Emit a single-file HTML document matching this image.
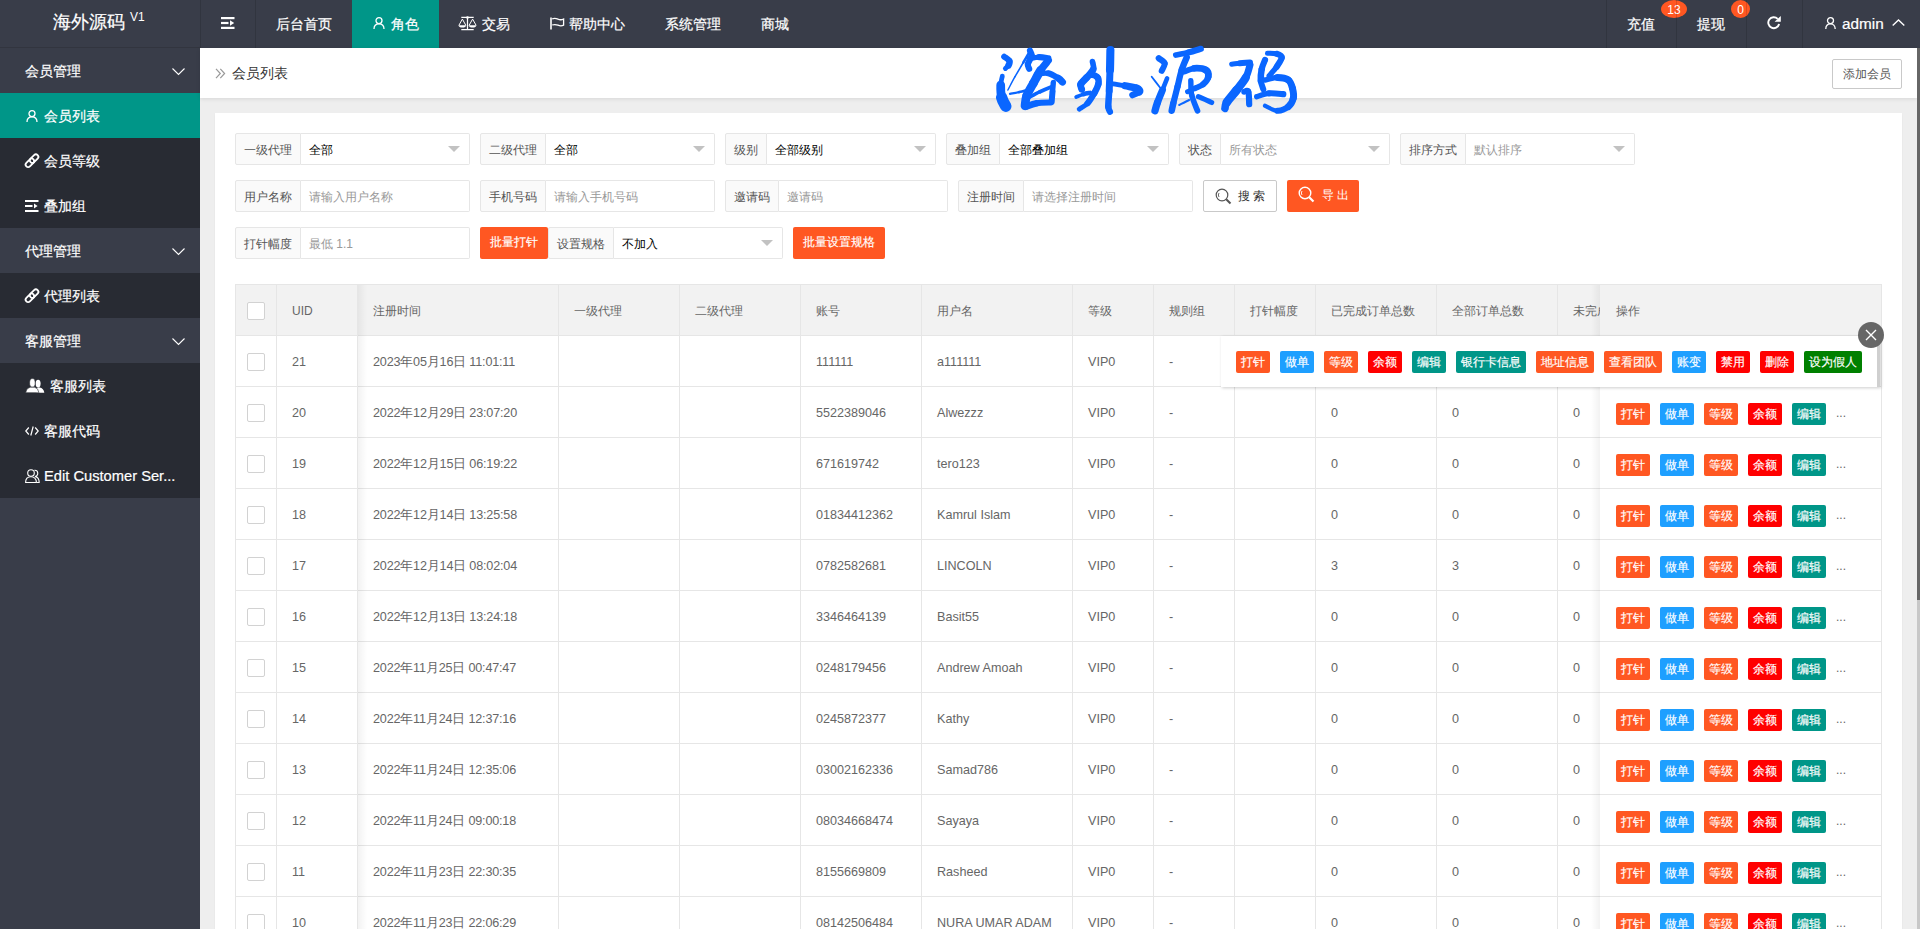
<!DOCTYPE html>
<html><head><meta charset="utf-8"><title>会员列表</title>
<style>
*{margin:0;padding:0;box-sizing:border-box}
html,body{width:1920px;height:929px;overflow:hidden}
body{position:relative;font-family:"Liberation Sans",sans-serif;background:#eeeeee;color:#666}
.a{position:absolute}
svg{position:absolute;overflow:visible}
/* header */
#hd{left:0;top:0;width:1920px;height:48px;background:#393D49}
.logo{left:0;top:0;width:200px;height:48px;border-bottom:1px solid #32353f}
.logo .t{left:53px;top:11px;font-size:18px;line-height:22px;color:#fff;white-space:nowrap;-webkit-text-stroke:0.2px #fff}
.logo .v{left:130px;top:10px;font-size:12px;line-height:14px;color:#fff}
.nv{top:0;height:48px;line-height:48px;color:#fff;font-size:14px;white-space:nowrap;-webkit-text-stroke:0.2px #fff}
.sep{top:0;width:1px;height:48px;background:rgba(0,0,0,.13)}
.badge{top:0;height:18px;line-height:20px;border-radius:50%;background:#FF5722;color:#fff;font-size:12px;text-align:center}
/* sidebar */
#sd{left:0;top:48px;width:200px;height:881px;background:#393D49}
.mi{left:0;width:200px;height:45px;line-height:47px;color:#fff;font-size:14px;white-space:nowrap;-webkit-text-stroke:0.2px #fff}
.dd{left:0;width:200px;background:#282B33}
.sel{background:#009688}
/* breadcrumb */
#bc{left:200px;top:48px;width:1717px;height:50px;background:#fff;box-shadow:0 1px 4px rgba(0,0,0,.1)}
#card{left:215px;top:113px;width:1687px;height:900px;background:#fff;box-shadow:0 1px 2px rgba(0,0,0,.05)}
.btnp{border:1px solid #C9C9C9;border-radius:2px;background:#fff;color:#555;font-size:12px;text-align:center}
/* form */
.lb{height:32px;line-height:32px;border:1px solid #e6e6e6;border-radius:2px 0 0 2px;background:#FAFAFA;color:#555;font-size:12px;padding:0 8px;white-space:nowrap}
.ip{height:32px;line-height:32px;border:1px solid #e6e6e6;border-left:0;border-radius:0 2px 2px 0;background:#fff;color:#000;font-size:12px;padding:0 8px;white-space:nowrap}
.ph{color:#999}
.tri{width:0;height:0;border-left:6px solid transparent;border-right:6px solid transparent;border-top:6px solid #c2c2c2}
.bo{height:32px;line-height:30px;background:#FF5722;color:#fff;border-radius:2px;font-size:12px;text-align:center;white-space:nowrap;-webkit-text-stroke:0.15px #fff}
#sb{left:1917px;top:48px;width:3px;height:881px;background:#c8c8c8}
#sbt{left:1917px;top:48px;width:3px;height:552px;background:#666}
</style><style>
.th{height:50px;line-height:52px;font-size:12px;color:#666;white-space:nowrap}
.td{height:50px;line-height:52px;font-size:12.6px;color:#666;white-space:nowrap}
.cb{width:18px;height:18px;border:1px solid #d2d2d2;border-radius:2px;background:#fff}
.bx{height:22px;line-height:22px;border-radius:2px;color:#fff;font-size:12px;text-align:center;white-space:nowrap;-webkit-text-stroke:0.15px #fff}
.dots{line-height:12px;font-size:12px;color:#666}
</style>
</head><body>

<!-- HEADER -->
<div id="hd" class="a">
  <div class="a logo"><div class="a t">海外源码</div><div class="a v">V1</div></div>
  <div class="sep a" style="left:200px"></div>
  <!-- shrink icon -->
  <svg style="left:221px;top:17px" width="14" height="12" viewBox="0 0 14 12"><rect x="0" y="0" width="13.5" height="2.2" fill="#fff"/><rect x="0" y="4.9" width="7.5" height="2.2" fill="#fff"/><path d="M9 3.2 L13.2 6 L9 8.8Z" fill="#fff"/><rect x="0" y="9.8" width="13.5" height="2.2" fill="#fff"/></svg>
  <div class="sep a" style="left:255px"></div>
  <div class="nv a" style="left:276px">后台首页</div>
  <div class="a" style="left:352px;top:0;width:87px;height:48px;background:#009688"></div>
  <svg style="left:373px;top:17px" width="12" height="12" viewBox="0 0 12 12"><circle cx="6" cy="3.6" r="3" fill="none" stroke="#fff" stroke-width="1.3"/><path d="M1 12 C1 8.6 3 6.8 6 6.8 C9 6.8 11 8.6 11 12" fill="none" stroke="#fff" stroke-width="1.3"/></svg>
  <div class="nv a" style="left:391px">角色</div>
  <!-- scale icon -->
  <svg style="left:454px;top:12px" width="28" height="22" viewBox="0 0 28 22"><g stroke="#fff" fill="none"><path d="M7.3 5.45 H19.7 M13.5 5.5 V17.5 M7.3 17.6 H19.7" stroke-width="1.2"/><path d="M8.4 7.1 L4.9 13.3 M8.4 7.1 L11.8 13.3 M18.6 7.1 L15.1 13.3 M18.6 7.1 L22.1 13.3" stroke-width="1"/></g><circle cx="13.5" cy="5.45" r="1.3" fill="#fff"/><path d="M4.5 13.2 H12.2 Q11.8 15.6 8.35 15.6 Q4.9 15.6 4.5 13.2Z M14.7 13.2 H22.4 Q22 15.6 18.55 15.6 Q15.1 15.6 14.7 13.2Z" fill="#fff"/></svg>
  <div class="nv a" style="left:482px">交易</div>
  <!-- flag icon -->
  <svg style="left:550px;top:17px" width="15" height="13" viewBox="0 0 15 13"><path d="M1 0.5 V12.5" stroke="#fff" stroke-width="1.6"/><path d="M2.2 1.8 Q5 0.8 8 2.2 Q11 3.4 13.6 2 V8.2 Q11 9.5 8 8.2 Q5 7 2.2 8" fill="none" stroke="#fff" stroke-width="1.3"/></svg>
  <div class="nv a" style="left:569px">帮助中心</div>
  <div class="nv a" style="left:665px">系统管理</div>
  <div class="nv a" style="left:761px">商城</div>

  <div class="sep a" style="left:1606px"></div>
  <div class="nv a" style="left:1627px">充值</div>
  <div class="badge a" style="left:1661px;width:26px">13</div>
  <div class="sep a" style="left:1676px"></div>
  <div class="nv a" style="left:1697px">提现</div>
  <div class="badge a" style="left:1731px;width:19px">0</div>
  <div class="sep a" style="left:1746px"></div>
  <!-- refresh -->
  <svg style="left:1767px;top:16px" width="14" height="14" viewBox="0 0 14 14"><path d="M10.69 2.81 A5.5 5.5 0 1 0 12.11 8.12" fill="none" stroke="#fff" stroke-width="1.9"/><path d="M7.6 5.8 L13.8 0 L13.8 5.8Z" fill="#fff"/></svg>
  <div class="sep a" style="left:1802px"></div>
  <svg style="left:1825px;top:17px" width="11" height="12" viewBox="0 0 11 12"><circle cx="5.5" cy="3.6" r="3" fill="none" stroke="#fff" stroke-width="1.3"/><path d="M0.8 12 C0.8 8.6 2.8 6.8 5.5 6.8 C8.2 6.8 10.2 8.6 10.2 12" fill="none" stroke="#fff" stroke-width="1.3"/></svg>
  <div class="nv a" style="left:1842px;font-size:15.3px">admin</div>
  <svg style="left:1892px;top:19px" width="13" height="7" viewBox="0 0 13 7"><path d="M0.7 6.5 L6.5 0.9 L12.3 6.5" fill="none" stroke="#fff" stroke-width="1.4"/></svg>
</div>

<!-- SIDEBAR -->
<div id="sd" class="a">
  <div class="mi a" style="top:0"><span class="a" style="left:25px">会员管理</span>
    <svg style="left:172px;top:20px" width="13" height="7" viewBox="0 0 13 7"><path d="M0.5 0.5 L6.5 6.5 L12.5 0.5" fill="none" stroke="#fff" stroke-width="1.1"/></svg></div>
  <div class="dd a" style="top:45px;height:135px"></div>
  <div class="mi a sel" style="top:45px">
    <svg style="left:26px;top:17px" width="12" height="12" viewBox="0 0 12 12"><circle cx="6" cy="3.6" r="3" fill="none" stroke="#fff" stroke-width="1.3"/><path d="M1 12 C1 8.6 3 6.8 6 6.8 C9 6.8 11 8.6 11 12" fill="none" stroke="#fff" stroke-width="1.3"/></svg>
    <span class="a" style="left:44px">会员列表</span></div>
  <div class="mi a" style="top:90px">
    <svg style="left:24px;top:14px" width="17" height="17" viewBox="0 0 17 17"><g fill="none" stroke="#fff" stroke-width="1.8"><rect x="0.9" y="8.3" width="10" height="5" rx="2.5" transform="rotate(-45 5.9 10.8)"/><rect x="5.1" y="4.1" width="10" height="5" rx="2.5" transform="rotate(-45 10.1 6.6)"/></g></svg>
    <span class="a" style="left:44px">会员等级</span></div>
  <div class="mi a" style="top:135px">
    <svg style="left:25px;top:17px" width="14" height="12" viewBox="0 0 14 12"><rect x="0" y="0" width="13.5" height="2" fill="#fff"/><rect x="0" y="5" width="7.5" height="2" fill="#fff"/><path d="M9 3.4 L12.6 6 L9 8.6Z" fill="#fff"/><rect x="0" y="10" width="13.5" height="2" fill="#fff"/></svg>
    <span class="a" style="left:44px">叠加组</span></div>
  <div class="mi a" style="top:180px"><span class="a" style="left:25px">代理管理</span>
    <svg style="left:172px;top:20px" width="13" height="7" viewBox="0 0 13 7"><path d="M0.5 0.5 L6.5 6.5 L12.5 0.5" fill="none" stroke="#fff" stroke-width="1.1"/></svg></div>
  <div class="dd a" style="top:225px;height:45px"></div>
  <div class="mi a" style="top:225px">
    <svg style="left:24px;top:14px" width="17" height="17" viewBox="0 0 17 17"><g fill="none" stroke="#fff" stroke-width="1.8"><rect x="0.9" y="8.3" width="10" height="5" rx="2.5" transform="rotate(-45 5.9 10.8)"/><rect x="5.1" y="4.1" width="10" height="5" rx="2.5" transform="rotate(-45 10.1 6.6)"/></g></svg>
    <span class="a" style="left:44px">代理列表</span></div>
  <div class="mi a" style="top:270px"><span class="a" style="left:25px">客服管理</span>
    <svg style="left:172px;top:20px" width="13" height="7" viewBox="0 0 13 7"><path d="M0.5 0.5 L6.5 6.5 L12.5 0.5" fill="none" stroke="#fff" stroke-width="1.1"/></svg></div>
  <div class="dd a" style="top:315px;height:135px"></div>
  <div class="mi a" style="top:315px">
    <svg style="left:25px;top:9px" width="20" height="22" viewBox="0 0 20 22"><g fill="#fff"><ellipse cx="13.1" cy="11.6" rx="2.5" ry="3.9"/><path d="M11.5 20.7 Q11.2 16.4 13 15.6 H14.6 Q18.8 16.3 19.3 20.7Z"/><ellipse cx="7.4" cy="10.9" rx="2.8" ry="4.3" stroke="#282B33" stroke-width="0.6"/><path d="M0.7 20.7 Q1.2 16 5.2 15.2 H9.6 Q13.4 16 13.9 20.7Z" stroke="#282B33" stroke-width="0.6"/></g></svg>
    <span class="a" style="left:50px">客服列表</span></div>
  <div class="mi a" style="top:360px">
    <svg style="left:25px;top:18px" width="14" height="10" viewBox="0 0 14 10"><path d="M3.8 1.5 L0.8 5 L3.8 8.5 M10.2 1.5 L13.2 5 L10.2 8.5 M8.2 0.5 L5.8 9.5" fill="none" stroke="#fff" stroke-width="1.2"/></svg>
    <span class="a" style="left:44px">客服代码</span></div>
  <div class="mi a" style="top:405px">
    <svg style="left:25px;top:16px" width="15" height="14" viewBox="0 0 15 14"><circle cx="6" cy="4" r="3.3" fill="none" stroke="#fff" stroke-width="1.1"/><path d="M0.6 13.5 C0.6 9.5 3 7.8 6 7.8 C9 7.8 11.4 9.5 11.4 13.5Z" fill="none" stroke="#fff" stroke-width="1.1"/><path d="M9.4 1.3 A3 3 0 0 1 10 7.4 C12.6 8 14.2 10 14.2 13.5 H12" fill="none" stroke="#fff" stroke-width="1.1"/></svg>
    <span class="a" style="left:44px;font-size:14.7px">Edit Customer Ser...</span></div>
</div>

<!-- BREADCRUMB -->
<div id="bc" class="a">
  <svg style="left:15px;top:20px" width="11" height="11" viewBox="0 0 11 11"><path d="M1 0.8 L5.3 5.5 L1 10.2 M5.3 0.8 L9.6 5.5 L5.3 10.2" fill="none" stroke="#999" stroke-width="1.2"/></svg>
  <div class="a" style="left:32px;top:0;line-height:50px;font-size:14px;color:#333">会员列表</div>
  <div class="a btnp" style="left:1632px;top:11px;width:70px;height:30px;line-height:28px">添加会员</div>
</div>
<div id="sb" class="a"></div><div id="sbt" class="a"></div>

<!-- CARD -->
<div id="card" class="a"></div>

<!-- FORM -->
<div class="a lb" style="left:235px;top:133px;width:66px">一级代理</div><div class="a ip" style="left:301px;top:133px;width:169px">全部</div><div class="a tri" style="left:448px;top:146px"></div>
<div class="a lb" style="left:480px;top:133px;width:66px">二级代理</div><div class="a ip" style="left:546px;top:133px;width:169px">全部</div><div class="a tri" style="left:693px;top:146px"></div>
<div class="a lb" style="left:725px;top:133px;width:42px">级别</div><div class="a ip" style="left:767px;top:133px;width:169px">全部级别</div><div class="a tri" style="left:914px;top:146px"></div>
<div class="a lb" style="left:946px;top:133px;width:54px">叠加组</div><div class="a ip" style="left:1000px;top:133px;width:169px">全部叠加组</div><div class="a tri" style="left:1147px;top:146px"></div>
<div class="a lb" style="left:1179px;top:133px;width:42px">状态</div><div class="a ip ph" style="left:1221px;top:133px;width:169px">所有状态</div><div class="a tri" style="left:1368px;top:146px"></div>
<div class="a lb" style="left:1400px;top:133px;width:66px">排序方式</div><div class="a ip ph" style="left:1466px;top:133px;width:169px">默认排序</div><div class="a tri" style="left:1613px;top:146px"></div>
<div class="a lb" style="left:235px;top:180px;width:66px">用户名称</div><div class="a ip ph" style="left:301px;top:180px;width:169px">请输入用户名称</div>
<div class="a lb" style="left:480px;top:180px;width:66px">手机号码</div><div class="a ip ph" style="left:546px;top:180px;width:169px">请输入手机号码</div>
<div class="a lb" style="left:725px;top:180px;width:54px">邀请码</div><div class="a ip ph" style="left:779px;top:180px;width:169px">邀请码</div>
<div class="a lb" style="left:958px;top:180px;width:66px">注册时间</div><div class="a ip ph" style="left:1024px;top:180px;width:169px">请选择注册时间</div>
<div class="a lb" style="left:235px;top:227px;width:66px">打针幅度</div><div class="a ip ph" style="left:301px;top:227px;width:169px">最低 1.1</div>
<div class="a btnp" style="left:1203px;top:180px;width:74px;height:32px"></div>
<svg style="left:1215px;top:188px" width="17" height="17" viewBox="0 0 17 17"><circle cx="7" cy="7" r="5.8" fill="none" stroke="#555" stroke-width="1.2"/><path d="M11.2 11.2 L15.5 15.5" stroke="#555" stroke-width="2"/><path d="M4 5 A3.5 3.5 0 0 0 4 9" fill="none" stroke="#555" stroke-width="0.9"/></svg>
<div class="a" style="left:1238px;top:180px;line-height:32px;font-size:12px;color:#333;letter-spacing:3px">搜索</div>
<div class="a bo" style="left:1287px;top:180px;width:72px"></div>
<svg style="left:1298px;top:186px" width="17" height="17" viewBox="0 0 17 17"><circle cx="7" cy="7" r="5.8" fill="none" stroke="#fff" stroke-width="1.4"/><path d="M11.2 11.2 L15.5 15.5" stroke="#fff" stroke-width="2.2"/><path d="M4 5 A3.5 3.5 0 0 0 4 9" fill="none" stroke="#fff" stroke-width="0.9"/></svg>
<div class="a" style="left:1322px;top:179px;line-height:32px;font-size:12px;color:#fff;letter-spacing:3px">导出</div>
<div class="a bo" style="left:480px;top:227px;width:68px">批量打针</div>
<div class="a lb" style="left:548px;top:227px;width:66px">设置规格</div><div class="a ip" style="left:614px;top:227px;width:169px">不加入</div><div class="a tri" style="left:761px;top:240px"></div>
<div class="a bo" style="left:793px;top:227px;width:92px">批量设置规格</div>
<!-- TABLE -->
<div class="a" style="left:235px;top:284px;width:1647px;height:645px;border:1px solid #e6e6e6;border-bottom:0;background:#fff"></div>
<div class="a" style="left:236px;top:285px;width:1645px;height:50px;background:#F2F2F2"></div>
<div class="a" style="left:276px;top:285px;width:1px;height:645px;background:#e6e6e6"></div>
<div class="a" style="left:357px;top:285px;width:1px;height:645px;background:#e6e6e6"></div>
<div class="a" style="left:558px;top:285px;width:1px;height:645px;background:#e6e6e6"></div>
<div class="a" style="left:679px;top:285px;width:1px;height:645px;background:#e6e6e6"></div>
<div class="a" style="left:800px;top:285px;width:1px;height:645px;background:#e6e6e6"></div>
<div class="a" style="left:921px;top:285px;width:1px;height:645px;background:#e6e6e6"></div>
<div class="a" style="left:1072px;top:285px;width:1px;height:645px;background:#e6e6e6"></div>
<div class="a" style="left:1153px;top:285px;width:1px;height:645px;background:#e6e6e6"></div>
<div class="a" style="left:1234px;top:285px;width:1px;height:645px;background:#e6e6e6"></div>
<div class="a" style="left:1315px;top:285px;width:1px;height:645px;background:#e6e6e6"></div>
<div class="a" style="left:1436px;top:285px;width:1px;height:645px;background:#e6e6e6"></div>
<div class="a" style="left:1557px;top:285px;width:1px;height:645px;background:#e6e6e6"></div>
<div class="a" style="left:236px;top:335px;width:1645px;height:1px;background:#e6e6e6"></div>
<div class="a" style="left:236px;top:386px;width:1645px;height:1px;background:#e6e6e6"></div>
<div class="a" style="left:236px;top:437px;width:1645px;height:1px;background:#e6e6e6"></div>
<div class="a" style="left:236px;top:488px;width:1645px;height:1px;background:#e6e6e6"></div>
<div class="a" style="left:236px;top:539px;width:1645px;height:1px;background:#e6e6e6"></div>
<div class="a" style="left:236px;top:590px;width:1645px;height:1px;background:#e6e6e6"></div>
<div class="a" style="left:236px;top:641px;width:1645px;height:1px;background:#e6e6e6"></div>
<div class="a" style="left:236px;top:692px;width:1645px;height:1px;background:#e6e6e6"></div>
<div class="a" style="left:236px;top:743px;width:1645px;height:1px;background:#e6e6e6"></div>
<div class="a" style="left:236px;top:794px;width:1645px;height:1px;background:#e6e6e6"></div>
<div class="a" style="left:236px;top:845px;width:1645px;height:1px;background:#e6e6e6"></div>
<div class="a" style="left:236px;top:896px;width:1645px;height:1px;background:#e6e6e6"></div>
<div class="a th" style="left:292px;top:285px">UID</div>
<div class="a th" style="left:373px;top:285px">注册时间</div>
<div class="a th" style="left:574px;top:285px">一级代理</div>
<div class="a th" style="left:695px;top:285px">二级代理</div>
<div class="a th" style="left:816px;top:285px">账号</div>
<div class="a th" style="left:937px;top:285px">用户名</div>
<div class="a th" style="left:1088px;top:285px">等级</div>
<div class="a th" style="left:1169px;top:285px">规则组</div>
<div class="a th" style="left:1250px;top:285px">打针幅度</div>
<div class="a th" style="left:1331px;top:285px">已完成订单总数</div>
<div class="a th" style="left:1452px;top:285px">全部订单总数</div>
<div class="a th" style="left:1573px;top:285px">未完成订单</div>
<div class="a td" style="left:373px;top:336px;letter-spacing:-0.18px">2023年05月16日 11:01:11</div>
<div class="a td" style="left:816px;top:336px">111111</div>
<div class="a td" style="left:937px;top:336px">a111111</div>
<div class="a td" style="left:1088px;top:336px">VIP0</div>
<div class="a td" style="left:1169px;top:336px">-</div>
<div class="a td" style="left:1331px;top:336px">0</div>
<div class="a td" style="left:1452px;top:336px">0</div>
<div class="a td" style="left:1573px;top:336px">0</div>
<div class="a td" style="left:373px;top:387px;letter-spacing:-0.18px">2022年12月29日 23:07:20</div>
<div class="a td" style="left:816px;top:387px">5522389046</div>
<div class="a td" style="left:937px;top:387px">Alwezzz</div>
<div class="a td" style="left:1088px;top:387px">VIP0</div>
<div class="a td" style="left:1169px;top:387px">-</div>
<div class="a td" style="left:1331px;top:387px">0</div>
<div class="a td" style="left:1452px;top:387px">0</div>
<div class="a td" style="left:1573px;top:387px">0</div>
<div class="a td" style="left:373px;top:438px;letter-spacing:-0.18px">2022年12月15日 06:19:22</div>
<div class="a td" style="left:816px;top:438px">671619742</div>
<div class="a td" style="left:937px;top:438px">tero123</div>
<div class="a td" style="left:1088px;top:438px">VIP0</div>
<div class="a td" style="left:1169px;top:438px">-</div>
<div class="a td" style="left:1331px;top:438px">0</div>
<div class="a td" style="left:1452px;top:438px">0</div>
<div class="a td" style="left:1573px;top:438px">0</div>
<div class="a td" style="left:373px;top:489px;letter-spacing:-0.18px">2022年12月14日 13:25:58</div>
<div class="a td" style="left:816px;top:489px">01834412362</div>
<div class="a td" style="left:937px;top:489px">Kamrul Islam</div>
<div class="a td" style="left:1088px;top:489px">VIP0</div>
<div class="a td" style="left:1169px;top:489px">-</div>
<div class="a td" style="left:1331px;top:489px">0</div>
<div class="a td" style="left:1452px;top:489px">0</div>
<div class="a td" style="left:1573px;top:489px">0</div>
<div class="a td" style="left:373px;top:540px;letter-spacing:-0.18px">2022年12月14日 08:02:04</div>
<div class="a td" style="left:816px;top:540px">0782582681</div>
<div class="a td" style="left:937px;top:540px">LINCOLN</div>
<div class="a td" style="left:1088px;top:540px">VIP0</div>
<div class="a td" style="left:1169px;top:540px">-</div>
<div class="a td" style="left:1331px;top:540px">3</div>
<div class="a td" style="left:1452px;top:540px">3</div>
<div class="a td" style="left:1573px;top:540px">0</div>
<div class="a td" style="left:373px;top:591px;letter-spacing:-0.18px">2022年12月13日 13:24:18</div>
<div class="a td" style="left:816px;top:591px">3346464139</div>
<div class="a td" style="left:937px;top:591px">Basit55</div>
<div class="a td" style="left:1088px;top:591px">VIP0</div>
<div class="a td" style="left:1169px;top:591px">-</div>
<div class="a td" style="left:1331px;top:591px">0</div>
<div class="a td" style="left:1452px;top:591px">0</div>
<div class="a td" style="left:1573px;top:591px">0</div>
<div class="a td" style="left:373px;top:642px;letter-spacing:-0.18px">2022年11月25日 00:47:47</div>
<div class="a td" style="left:816px;top:642px">0248179456</div>
<div class="a td" style="left:937px;top:642px">Andrew Amoah</div>
<div class="a td" style="left:1088px;top:642px">VIP0</div>
<div class="a td" style="left:1169px;top:642px">-</div>
<div class="a td" style="left:1331px;top:642px">0</div>
<div class="a td" style="left:1452px;top:642px">0</div>
<div class="a td" style="left:1573px;top:642px">0</div>
<div class="a td" style="left:373px;top:693px;letter-spacing:-0.18px">2022年11月24日 12:37:16</div>
<div class="a td" style="left:816px;top:693px">0245872377</div>
<div class="a td" style="left:937px;top:693px">Kathy</div>
<div class="a td" style="left:1088px;top:693px">VIP0</div>
<div class="a td" style="left:1169px;top:693px">-</div>
<div class="a td" style="left:1331px;top:693px">0</div>
<div class="a td" style="left:1452px;top:693px">0</div>
<div class="a td" style="left:1573px;top:693px">0</div>
<div class="a td" style="left:373px;top:744px;letter-spacing:-0.18px">2022年11月24日 12:35:06</div>
<div class="a td" style="left:816px;top:744px">03002162336</div>
<div class="a td" style="left:937px;top:744px">Samad786</div>
<div class="a td" style="left:1088px;top:744px">VIP0</div>
<div class="a td" style="left:1169px;top:744px">-</div>
<div class="a td" style="left:1331px;top:744px">0</div>
<div class="a td" style="left:1452px;top:744px">0</div>
<div class="a td" style="left:1573px;top:744px">0</div>
<div class="a td" style="left:373px;top:795px;letter-spacing:-0.18px">2022年11月24日 09:00:18</div>
<div class="a td" style="left:816px;top:795px">08034668474</div>
<div class="a td" style="left:937px;top:795px">Sayaya</div>
<div class="a td" style="left:1088px;top:795px">VIP0</div>
<div class="a td" style="left:1169px;top:795px">-</div>
<div class="a td" style="left:1331px;top:795px">0</div>
<div class="a td" style="left:1452px;top:795px">0</div>
<div class="a td" style="left:1573px;top:795px">0</div>
<div class="a td" style="left:373px;top:846px;letter-spacing:-0.18px">2022年11月23日 22:30:35</div>
<div class="a td" style="left:816px;top:846px">8155669809</div>
<div class="a td" style="left:937px;top:846px">Rasheed</div>
<div class="a td" style="left:1088px;top:846px">VIP0</div>
<div class="a td" style="left:1169px;top:846px">-</div>
<div class="a td" style="left:1331px;top:846px">0</div>
<div class="a td" style="left:1452px;top:846px">0</div>
<div class="a td" style="left:1573px;top:846px">0</div>
<div class="a td" style="left:373px;top:897px;letter-spacing:-0.18px">2022年11月23日 22:06:29</div>
<div class="a td" style="left:816px;top:897px">08142506484</div>
<div class="a td" style="left:937px;top:897px">NURA UMAR ADAM</div>
<div class="a td" style="left:1088px;top:897px">VIP0</div>
<div class="a td" style="left:1169px;top:897px">-</div>
<div class="a td" style="left:1331px;top:897px">0</div>
<div class="a td" style="left:1452px;top:897px">0</div>
<div class="a td" style="left:1573px;top:897px">0</div>
<div class="a" style="left:236px;top:285px;width:121px;height:645px;background:#fff"></div>
<div class="a" style="left:358px;top:285px;width:9px;height:645px;background:linear-gradient(to right,rgba(0,0,0,.05),rgba(0,0,0,0))"></div>
<div class="a" style="left:236px;top:285px;width:121px;height:50px;background:#F2F2F2"></div>
<div class="a" style="left:276px;top:285px;width:1px;height:645px;background:#e6e6e6"></div>
<div class="a" style="left:357px;top:285px;width:1px;height:645px;background:#e6e6e6"></div>
<div class="a" style="left:236px;top:335px;width:121px;height:1px;background:#e6e6e6"></div>
<div class="a" style="left:236px;top:386px;width:121px;height:1px;background:#e6e6e6"></div>
<div class="a" style="left:236px;top:437px;width:121px;height:1px;background:#e6e6e6"></div>
<div class="a" style="left:236px;top:488px;width:121px;height:1px;background:#e6e6e6"></div>
<div class="a" style="left:236px;top:539px;width:121px;height:1px;background:#e6e6e6"></div>
<div class="a" style="left:236px;top:590px;width:121px;height:1px;background:#e6e6e6"></div>
<div class="a" style="left:236px;top:641px;width:121px;height:1px;background:#e6e6e6"></div>
<div class="a" style="left:236px;top:692px;width:121px;height:1px;background:#e6e6e6"></div>
<div class="a" style="left:236px;top:743px;width:121px;height:1px;background:#e6e6e6"></div>
<div class="a" style="left:236px;top:794px;width:121px;height:1px;background:#e6e6e6"></div>
<div class="a" style="left:236px;top:845px;width:121px;height:1px;background:#e6e6e6"></div>
<div class="a" style="left:236px;top:896px;width:121px;height:1px;background:#e6e6e6"></div>
<div class="a cb" style="left:247px;top:302px"></div>
<div class="a th" style="left:292px;top:285px">UID</div>
<div class="a cb" style="left:247px;top:353px"></div>
<div class="a td" style="left:292px;top:336px">21</div>
<div class="a cb" style="left:247px;top:404px"></div>
<div class="a td" style="left:292px;top:387px">20</div>
<div class="a cb" style="left:247px;top:455px"></div>
<div class="a td" style="left:292px;top:438px">19</div>
<div class="a cb" style="left:247px;top:506px"></div>
<div class="a td" style="left:292px;top:489px">18</div>
<div class="a cb" style="left:247px;top:557px"></div>
<div class="a td" style="left:292px;top:540px">17</div>
<div class="a cb" style="left:247px;top:608px"></div>
<div class="a td" style="left:292px;top:591px">16</div>
<div class="a cb" style="left:247px;top:659px"></div>
<div class="a td" style="left:292px;top:642px">15</div>
<div class="a cb" style="left:247px;top:710px"></div>
<div class="a td" style="left:292px;top:693px">14</div>
<div class="a cb" style="left:247px;top:761px"></div>
<div class="a td" style="left:292px;top:744px">13</div>
<div class="a cb" style="left:247px;top:812px"></div>
<div class="a td" style="left:292px;top:795px">12</div>
<div class="a cb" style="left:247px;top:863px"></div>
<div class="a td" style="left:292px;top:846px">11</div>
<div class="a cb" style="left:247px;top:914px"></div>
<div class="a td" style="left:292px;top:897px">10</div>
<div class="a" style="left:1591px;top:285px;width:9px;height:645px;background:linear-gradient(to left,rgba(0,0,0,.05),rgba(0,0,0,0))"></div>
<div class="a" style="left:1600px;top:285px;width:281px;height:645px;background:#fff"></div>
<div class="a" style="left:1600px;top:285px;width:281px;height:50px;background:#F2F2F2"></div>
<div class="a" style="left:1600px;top:335px;width:281px;height:1px;background:#e6e6e6"></div>
<div class="a" style="left:1600px;top:386px;width:281px;height:1px;background:#e6e6e6"></div>
<div class="a" style="left:1600px;top:437px;width:281px;height:1px;background:#e6e6e6"></div>
<div class="a" style="left:1600px;top:488px;width:281px;height:1px;background:#e6e6e6"></div>
<div class="a" style="left:1600px;top:539px;width:281px;height:1px;background:#e6e6e6"></div>
<div class="a" style="left:1600px;top:590px;width:281px;height:1px;background:#e6e6e6"></div>
<div class="a" style="left:1600px;top:641px;width:281px;height:1px;background:#e6e6e6"></div>
<div class="a" style="left:1600px;top:692px;width:281px;height:1px;background:#e6e6e6"></div>
<div class="a" style="left:1600px;top:743px;width:281px;height:1px;background:#e6e6e6"></div>
<div class="a" style="left:1600px;top:794px;width:281px;height:1px;background:#e6e6e6"></div>
<div class="a" style="left:1600px;top:845px;width:281px;height:1px;background:#e6e6e6"></div>
<div class="a" style="left:1600px;top:896px;width:281px;height:1px;background:#e6e6e6"></div>
<div class="a th" style="left:1616px;top:285px">操作</div>
<div class="a bx" style="left:1616px;top:403px;width:34px;background:#FF5722">打针</div>
<div class="a bx" style="left:1660px;top:403px;width:34px;background:#1E9FFF">做单</div>
<div class="a bx" style="left:1704px;top:403px;width:34px;background:#FF5722">等级</div>
<div class="a bx" style="left:1748px;top:403px;width:34px;background:#FF0000">余额</div>
<div class="a bx" style="left:1792px;top:403px;width:34px;background:#009688">编辑</div>
<div class="a dots" style="left:1836px;top:407px">...</div>
<div class="a bx" style="left:1616px;top:454px;width:34px;background:#FF5722">打针</div>
<div class="a bx" style="left:1660px;top:454px;width:34px;background:#1E9FFF">做单</div>
<div class="a bx" style="left:1704px;top:454px;width:34px;background:#FF5722">等级</div>
<div class="a bx" style="left:1748px;top:454px;width:34px;background:#FF0000">余额</div>
<div class="a bx" style="left:1792px;top:454px;width:34px;background:#009688">编辑</div>
<div class="a dots" style="left:1836px;top:458px">...</div>
<div class="a bx" style="left:1616px;top:505px;width:34px;background:#FF5722">打针</div>
<div class="a bx" style="left:1660px;top:505px;width:34px;background:#1E9FFF">做单</div>
<div class="a bx" style="left:1704px;top:505px;width:34px;background:#FF5722">等级</div>
<div class="a bx" style="left:1748px;top:505px;width:34px;background:#FF0000">余额</div>
<div class="a bx" style="left:1792px;top:505px;width:34px;background:#009688">编辑</div>
<div class="a dots" style="left:1836px;top:509px">...</div>
<div class="a bx" style="left:1616px;top:556px;width:34px;background:#FF5722">打针</div>
<div class="a bx" style="left:1660px;top:556px;width:34px;background:#1E9FFF">做单</div>
<div class="a bx" style="left:1704px;top:556px;width:34px;background:#FF5722">等级</div>
<div class="a bx" style="left:1748px;top:556px;width:34px;background:#FF0000">余额</div>
<div class="a bx" style="left:1792px;top:556px;width:34px;background:#009688">编辑</div>
<div class="a dots" style="left:1836px;top:560px">...</div>
<div class="a bx" style="left:1616px;top:607px;width:34px;background:#FF5722">打针</div>
<div class="a bx" style="left:1660px;top:607px;width:34px;background:#1E9FFF">做单</div>
<div class="a bx" style="left:1704px;top:607px;width:34px;background:#FF5722">等级</div>
<div class="a bx" style="left:1748px;top:607px;width:34px;background:#FF0000">余额</div>
<div class="a bx" style="left:1792px;top:607px;width:34px;background:#009688">编辑</div>
<div class="a dots" style="left:1836px;top:611px">...</div>
<div class="a bx" style="left:1616px;top:658px;width:34px;background:#FF5722">打针</div>
<div class="a bx" style="left:1660px;top:658px;width:34px;background:#1E9FFF">做单</div>
<div class="a bx" style="left:1704px;top:658px;width:34px;background:#FF5722">等级</div>
<div class="a bx" style="left:1748px;top:658px;width:34px;background:#FF0000">余额</div>
<div class="a bx" style="left:1792px;top:658px;width:34px;background:#009688">编辑</div>
<div class="a dots" style="left:1836px;top:662px">...</div>
<div class="a bx" style="left:1616px;top:709px;width:34px;background:#FF5722">打针</div>
<div class="a bx" style="left:1660px;top:709px;width:34px;background:#1E9FFF">做单</div>
<div class="a bx" style="left:1704px;top:709px;width:34px;background:#FF5722">等级</div>
<div class="a bx" style="left:1748px;top:709px;width:34px;background:#FF0000">余额</div>
<div class="a bx" style="left:1792px;top:709px;width:34px;background:#009688">编辑</div>
<div class="a dots" style="left:1836px;top:713px">...</div>
<div class="a bx" style="left:1616px;top:760px;width:34px;background:#FF5722">打针</div>
<div class="a bx" style="left:1660px;top:760px;width:34px;background:#1E9FFF">做单</div>
<div class="a bx" style="left:1704px;top:760px;width:34px;background:#FF5722">等级</div>
<div class="a bx" style="left:1748px;top:760px;width:34px;background:#FF0000">余额</div>
<div class="a bx" style="left:1792px;top:760px;width:34px;background:#009688">编辑</div>
<div class="a dots" style="left:1836px;top:764px">...</div>
<div class="a bx" style="left:1616px;top:811px;width:34px;background:#FF5722">打针</div>
<div class="a bx" style="left:1660px;top:811px;width:34px;background:#1E9FFF">做单</div>
<div class="a bx" style="left:1704px;top:811px;width:34px;background:#FF5722">等级</div>
<div class="a bx" style="left:1748px;top:811px;width:34px;background:#FF0000">余额</div>
<div class="a bx" style="left:1792px;top:811px;width:34px;background:#009688">编辑</div>
<div class="a dots" style="left:1836px;top:815px">...</div>
<div class="a bx" style="left:1616px;top:862px;width:34px;background:#FF5722">打针</div>
<div class="a bx" style="left:1660px;top:862px;width:34px;background:#1E9FFF">做单</div>
<div class="a bx" style="left:1704px;top:862px;width:34px;background:#FF5722">等级</div>
<div class="a bx" style="left:1748px;top:862px;width:34px;background:#FF0000">余额</div>
<div class="a bx" style="left:1792px;top:862px;width:34px;background:#009688">编辑</div>
<div class="a dots" style="left:1836px;top:866px">...</div>
<div class="a bx" style="left:1616px;top:913px;width:34px;background:#FF5722">打针</div>
<div class="a bx" style="left:1660px;top:913px;width:34px;background:#1E9FFF">做单</div>
<div class="a bx" style="left:1704px;top:913px;width:34px;background:#FF5722">等级</div>
<div class="a bx" style="left:1748px;top:913px;width:34px;background:#FF0000">余额</div>
<div class="a bx" style="left:1792px;top:913px;width:34px;background:#009688">编辑</div>
<div class="a dots" style="left:1836px;top:917px">...</div>
<div class="a" style="left:1221px;top:336px;width:659px;height:51px;background:#fff;box-shadow:1px 1px 3px rgba(0,0,0,.2)"></div>
<div class="a" style="left:1877px;top:336px;width:3px;height:51px;background:#cfcfcf"></div>
<div class="a bx" style="left:1236px;top:351px;width:34px;background:#FF5722">打针</div>
<div class="a bx" style="left:1280px;top:351px;width:34px;background:#1E9FFF">做单</div>
<div class="a bx" style="left:1324px;top:351px;width:34px;background:#FF5722">等级</div>
<div class="a bx" style="left:1368px;top:351px;width:34px;background:#FF0000">余额</div>
<div class="a bx" style="left:1412px;top:351px;width:34px;background:#009688">编辑</div>
<div class="a bx" style="left:1456px;top:351px;width:70px;background:#009688">银行卡信息</div>
<div class="a bx" style="left:1536px;top:351px;width:58px;background:#FF5722">地址信息</div>
<div class="a bx" style="left:1604px;top:351px;width:58px;background:#FF5722">查看团队</div>
<div class="a bx" style="left:1672px;top:351px;width:34px;background:#1E9FFF">账变</div>
<div class="a bx" style="left:1716px;top:351px;width:34px;background:#FF0000">禁用</div>
<div class="a bx" style="left:1760px;top:351px;width:34px;background:#FF0000">删除</div>
<div class="a bx" style="left:1804px;top:351px;width:58px;background:#008000">设为假人</div>
<div class="a" style="left:1858px;top:322px;width:26px;height:26px;border-radius:50%;background:#666"></div>
<svg style="left:1865px;top:329px" width="12" height="12" viewBox="0 0 12 12"><path d="M1 1 L11 11 M11 1 L1 11" stroke="#fff" stroke-width="1.4"/></svg>
<svg style="left:0;top:0" width="1920" height="929" viewBox="0 0 1920 929"><g fill="none" stroke="#0a66ff" stroke-linecap="round" stroke-linejoin="round"><path d="M1004.2 56.7C1005.0 57.4 1008.6 59.4 1009.3 60.8" stroke-width="6.0"/><path d="M1009.3 60.8C1010.1 62.3 1009.2 64.1 1008.5 65.4" stroke-width="6.5"/><path d="M1008.5 65.4C1007.8 66.7 1005.9 68.0 1005.4 68.5" stroke-width="4.9"/><path d="M1002.3 76.2C1002.1 77.7 1000.8 81.5 1000.7 85.0" stroke-width="4.8"/><path d="M1000.7 85.0C1000.6 88.5 1000.8 94.0 1001.7 97.5" stroke-width="8.7"/><path d="M1001.7 97.5C1002.5 101.0 1005.1 104.8 1005.8 106.2" stroke-width="11.4"/><path d="M1007.9 90.0C1009.1 87.8 1012.4 81.2 1015.0 76.7" stroke-width="1.5"/><path d="M1015.0 76.7C1017.6 72.1 1020.8 66.8 1023.3 62.5" stroke-width="1.6"/><path d="M1023.3 62.5C1025.8 58.2 1028.9 52.8 1030.0 50.8" stroke-width="2.5"/><path d="M1010.0 93.8C1011.5 93.5 1016.1 92.8 1019.2 92.1" stroke-width="2.2"/><path d="M1019.2 92.1C1022.2 91.4 1026.8 90.0 1028.3 89.6" stroke-width="2.6"/><path d="M1030.0 50.8C1030.3 51.7 1032.0 53.6 1031.7 55.8" stroke-width="6.2"/><path d="M1031.7 55.8C1031.3 58.1 1028.3 62.0 1027.9 64.2" stroke-width="6.2"/><path d="M1027.9 64.2C1027.5 66.3 1029.0 68.0 1029.2 68.8" stroke-width="6.2"/><path d="M1029.2 58.8C1030.8 58.5 1036.0 57.2 1039.2 57.1" stroke-width="5.1"/><path d="M1039.2 57.1C1042.4 57.0 1046.8 58.1 1048.3 58.3" stroke-width="6.2"/><path d="M1048.3 60.4C1047.1 62.0 1043.3 66.2 1040.8 70.0" stroke-width="7.3"/><path d="M1040.8 70.0C1038.3 73.8 1035.7 79.0 1033.3 83.3" stroke-width="8.7"/><path d="M1033.3 83.3C1031.0 87.6 1028.1 92.1 1026.7 95.8" stroke-width="8.7"/><path d="M1026.7 95.8C1025.3 99.6 1025.3 104.2 1025.0 105.8" stroke-width="8.7"/><path d="M1036.7 74.2C1038.6 74.0 1044.7 72.6 1048.3 73.3" stroke-width="5.1"/><path d="M1048.3 73.3C1051.9 74.0 1056.0 76.9 1058.3 78.3" stroke-width="6.2"/><path d="M1058.3 78.3C1060.7 79.8 1061.8 81.5 1062.5 82.1" stroke-width="7.0"/><path d="M1053.3 82.5C1053.2 84.0 1052.8 88.5 1052.5 91.7" stroke-width="5.4"/><path d="M1052.5 91.7C1052.2 94.9 1051.8 100.0 1051.7 101.7" stroke-width="6.0"/><path d="M1025.8 106.7C1027.6 106.1 1032.5 104.0 1036.7 103.3" stroke-width="6.5"/><path d="M1036.7 103.3C1040.8 102.6 1048.5 102.6 1050.8 102.5" stroke-width="6.0"/><path d="M1029.2 97.5C1031.0 96.5 1036.2 93.5 1040.0 91.7" stroke-width="3.5"/><path d="M1040.0 91.7C1043.8 89.9 1049.7 87.5 1051.7 86.7" stroke-width="3.8"/><path d="M1092.5 61.7C1092.6 62.9 1094.3 66.5 1093.3 69.2" stroke-width="5.7"/><path d="M1093.3 69.2C1092.4 71.8 1088.8 75.0 1086.7 77.5" stroke-width="6.8"/><path d="M1086.7 77.5C1084.6 80.0 1081.7 82.2 1080.8 84.2" stroke-width="7.3"/><path d="M1080.8 84.2C1080.0 86.1 1081.5 88.3 1081.7 89.2" stroke-width="6.8"/><path d="M1082.5 80.8C1083.9 79.9 1088.3 75.6 1090.8 75.0" stroke-width="5.1"/><path d="M1090.8 75.0C1093.3 74.4 1096.2 76.0 1097.5 77.5" stroke-width="6.2"/><path d="M1097.5 77.5C1098.8 79.0 1098.9 81.5 1098.3 84.2" stroke-width="6.5"/><path d="M1098.3 84.2C1097.8 86.8 1096.0 90.1 1094.2 93.3" stroke-width="6.5"/><path d="M1094.2 93.3C1092.4 96.5 1090.0 100.7 1087.5 103.3" stroke-width="6.2"/><path d="M1087.5 103.3C1085.0 106.0 1080.6 108.2 1079.2 109.2" stroke-width="4.9"/><path d="M1076.2 97.1C1077.4 96.6 1081.0 94.9 1083.3 94.2" stroke-width="3.8"/><path d="M1083.3 94.2C1085.6 93.5 1088.9 93.1 1090.0 92.9" stroke-width="4.6"/><path d="M1110.4 50.0C1110.3 53.3 1110.2 63.2 1110.0 70.0" stroke-width="8.1"/><path d="M1110.0 70.0C1109.8 76.8 1109.4 84.7 1109.2 90.8" stroke-width="7.0"/><path d="M1109.2 90.8C1108.9 96.9 1108.2 103.2 1108.3 106.7" stroke-width="6.5"/><path d="M1108.3 106.7C1108.5 110.1 1109.7 110.8 1110.0 111.7" stroke-width="6.2"/><path d="M1110.8 83.3C1113.2 83.8 1120.7 85.0 1125.0 85.8" stroke-width="4.9"/><path d="M1125.0 85.8C1129.3 86.7 1134.3 87.4 1136.7 88.3" stroke-width="7.3"/><path d="M1136.7 88.3C1139.0 89.3 1139.9 90.6 1139.2 91.7" stroke-width="7.9"/><path d="M1139.2 91.7C1138.5 92.8 1133.6 94.4 1132.5 95.0" stroke-width="6.5"/><path d="M1158.8 58.3C1159.7 59.2 1164.1 61.2 1164.6 63.3" stroke-width="6.2"/><path d="M1164.6 63.3C1165.1 65.4 1162.2 69.6 1161.7 70.8" stroke-width="6.0"/><path d="M1151.7 76.7C1153.1 78.5 1158.6 85.7 1160.0 87.5" stroke-width="1.8"/><path d="M1167.1 78.3C1166.3 80.3 1164.1 86.0 1162.5 90.0" stroke-width="4.6"/><path d="M1162.5 90.0C1160.9 94.0 1158.8 99.0 1157.5 102.5" stroke-width="7.0"/><path d="M1157.5 102.5C1156.2 106.0 1155.4 109.4 1155.0 110.8" stroke-width="7.3"/><path d="M1175.8 55.0C1177.9 54.6 1184.2 53.5 1188.3 52.5" stroke-width="5.7"/><path d="M1188.3 52.5C1192.5 51.5 1198.8 49.4 1200.8 48.8" stroke-width="6.2"/><path d="M1186.7 57.5C1185.8 59.6 1183.2 65.1 1181.7 70.0" stroke-width="6.5"/><path d="M1181.7 70.0C1180.1 74.9 1178.9 81.1 1177.5 86.7" stroke-width="6.2"/><path d="M1177.5 86.7C1176.1 92.2 1174.3 99.3 1173.3 103.3" stroke-width="6.2"/><path d="M1173.3 103.3C1172.4 107.4 1171.9 109.6 1171.7 110.8" stroke-width="6.5"/><path d="M1184.2 71.7C1185.8 71.1 1190.6 68.6 1194.2 68.3" stroke-width="5.7"/><path d="M1194.2 68.3C1197.8 68.1 1203.5 68.6 1205.8 70.0" stroke-width="6.8"/><path d="M1205.8 70.0C1208.2 71.4 1208.8 74.3 1208.3 76.7" stroke-width="6.8"/><path d="M1208.3 76.7C1207.9 79.0 1205.6 82.2 1203.3 84.2" stroke-width="6.2"/><path d="M1203.3 84.2C1201.1 86.1 1197.6 87.1 1195.0 88.3" stroke-width="5.7"/><path d="M1195.0 88.3C1192.4 89.6 1188.8 91.1 1187.5 91.7" stroke-width="4.9"/><path d="M1190.8 80.8C1191.0 83.2 1190.6 90.0 1191.7 95.0" stroke-width="5.4"/><path d="M1191.7 95.0C1192.8 100.0 1196.5 108.2 1197.5 110.8" stroke-width="5.7"/><path d="M1179.2 105.0C1180.8 104.2 1187.5 100.8 1189.2 100.0" stroke-width="2.0"/><path d="M1198.3 96.7C1200.6 97.6 1209.4 101.5 1211.7 102.5" stroke-width="5.1"/><path d="M1231.7 64.2C1233.1 64.0 1236.9 63.6 1240.0 63.3" stroke-width="5.1"/><path d="M1240.0 63.3C1243.1 63.1 1248.3 62.6 1250.0 62.5" stroke-width="6.0"/><path d="M1250.0 65.0C1249.3 67.1 1248.1 73.3 1245.8 77.5" stroke-width="7.0"/><path d="M1245.8 77.5C1243.6 81.7 1239.9 85.8 1236.7 90.0" stroke-width="8.1"/><path d="M1236.7 90.0C1233.5 94.2 1228.6 99.4 1226.7 102.5" stroke-width="8.7"/><path d="M1226.7 102.5C1224.7 105.6 1225.3 107.4 1225.0 108.3" stroke-width="7.6"/><path d="M1244.2 91.7C1244.9 91.7 1247.5 89.6 1248.3 91.7" stroke-width="6.0"/><path d="M1248.3 91.7C1249.2 93.7 1249.0 102.1 1249.2 104.2" stroke-width="6.2"/><path d="M1267.5 53.3C1269.0 53.4 1274.3 53.1 1276.7 53.8" stroke-width="5.1"/><path d="M1276.7 53.8C1279.0 54.4 1281.7 55.3 1281.7 57.5" stroke-width="6.2"/><path d="M1281.7 57.5C1281.7 59.7 1278.8 63.6 1276.7 66.7" stroke-width="6.2"/><path d="M1276.7 66.7C1274.6 69.7 1270.4 74.3 1269.2 75.8" stroke-width="5.4"/><path d="M1265.0 60.0C1264.4 61.5 1262.4 65.7 1261.7 69.2" stroke-width="6.2"/><path d="M1261.7 69.2C1261.0 72.6 1260.6 77.5 1260.8 80.8" stroke-width="6.5"/><path d="M1260.8 80.8C1261.1 84.2 1262.9 87.8 1263.3 89.2" stroke-width="6.0"/><path d="M1265.0 80.0C1267.1 79.6 1273.6 77.5 1277.5 77.5" stroke-width="5.4"/><path d="M1277.5 77.5C1281.4 77.5 1285.8 78.2 1288.3 80.0" stroke-width="6.8"/><path d="M1288.3 80.0C1290.8 81.8 1291.7 85.3 1292.5 88.3" stroke-width="7.0"/><path d="M1292.5 88.3C1293.3 91.4 1294.0 95.3 1293.3 98.3" stroke-width="7.0"/><path d="M1293.3 98.3C1292.6 101.4 1291.0 104.6 1288.3 106.7" stroke-width="6.8"/><path d="M1288.3 106.7C1285.7 108.7 1281.4 111.0 1277.5 110.8" stroke-width="6.0"/><path d="M1277.5 110.8C1273.6 110.7 1267.1 106.7 1265.0 105.8" stroke-width="4.3"/><path d="M1256.7 96.7C1258.8 96.1 1264.7 93.8 1269.2 93.3" stroke-width="5.4"/><path d="M1269.2 93.3C1273.6 92.9 1281.0 94.0 1283.3 94.2" stroke-width="6.2"/></g></svg>
</body></html>
